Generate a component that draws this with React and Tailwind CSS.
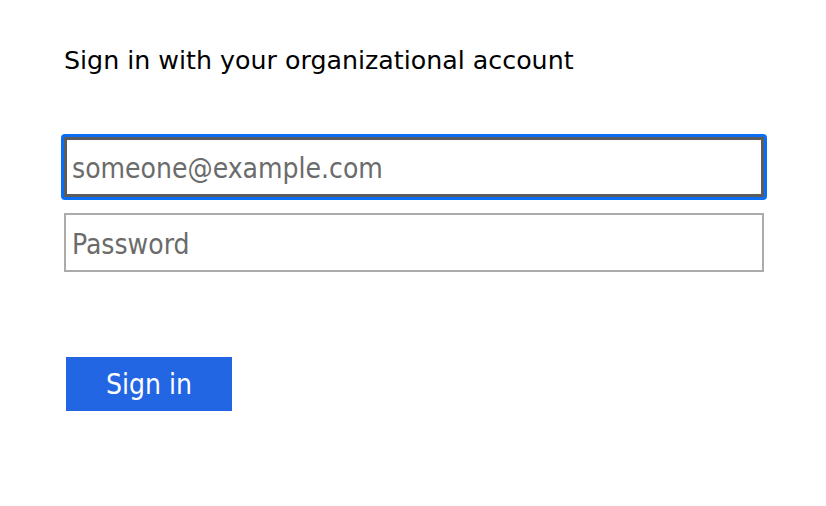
export default function App() {
    return (
        <div className="w-[826px] h-[506px] bg-white font-['DejaVu_Sans_Condensed','DejaVu_Sans',sans-serif]">
            <div className="pl-[64px] pt-[45px] w-[764px]">
                <h1 className="font-['DejaVu_Sans',sans-serif] text-[25.3px] leading-[32px] text-black">Sign in with your organizational account</h1>
                <div className="mt-[60px] flex flex-col gap-[16px]">
                    <div className="rounded-[4px] p-[3px] -m-[3px] bg-[#0a6ef5]">
                        <input
                            type="email"
                            placeholder="someone@example.com"
                            className="block w-full h-[60px] pl-[5px] pr-[6px] pt-[3px] border-[3px] border-[#5c5c5c] bg-white text-[28px] text-[#666] placeholder:text-[#6b6b6b] outline-none"
                        />
                    </div>
                    <input
                        type="password"
                        placeholder="Password"
                        className="block w-full h-[59px] px-[6px] pt-[4px] border-2 border-[#ababab] bg-white text-[28px] placeholder:text-[#6b6b6b] outline-none"
                    />
                </div>
                <button className="mt-[85px] ml-[2px] w-[166px] h-[54px] pt-[1px] bg-[#2266e3] text-white text-[28px]">
                    Sign in
                </button>
            </div>
        </div>
    );
}
